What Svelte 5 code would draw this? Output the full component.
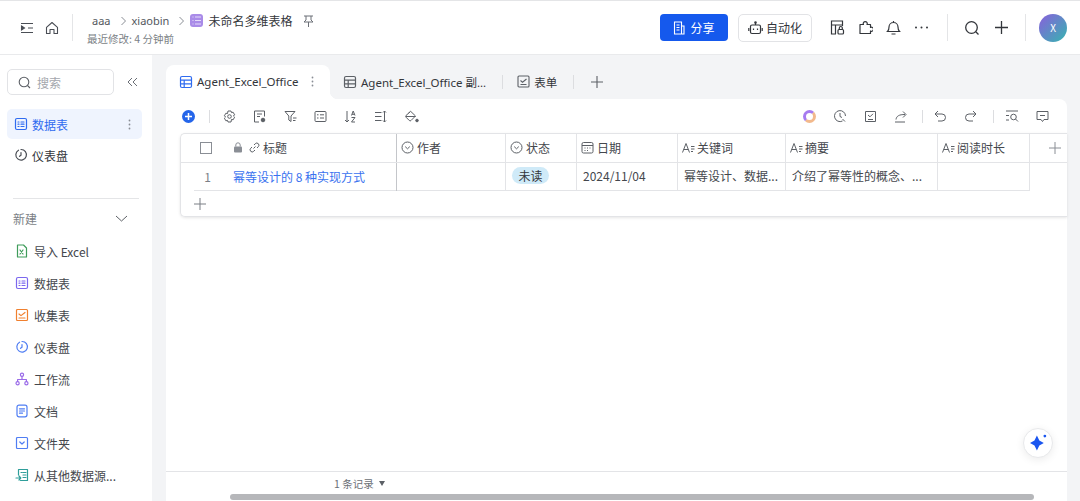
<script>
	const newItems = [
		{ label: '导入 Excel', icon: 'excel', color: '#3f9c5a' },
		{ label: '数据表', icon: 'table', color: '#7b67ee' },
		{ label: '收集表', icon: 'form', color: '#f0802f' },
		{ label: '仪表盘', icon: 'dash', color: '#4f7df3' },
		{ label: '工作流', icon: 'flow', color: '#9a6be8' },
		{ label: '文档', icon: 'doc', color: '#4f7df3' },
		{ label: '文件夹', icon: 'folder', color: '#4f7df3' },
		{ label: '从其他数据源...', icon: 'source', color: '#2f9e9a' }
	];
	const columns = [
		{ label: '作者', icon: 'select', width: 109 },
		{ label: '状态', icon: 'select', width: 71 },
		{ label: '日期', icon: 'date', width: 101 },
		{ label: '关键词', icon: 'text', width: 108 },
		{ label: '摘要', icon: 'text', width: 152 },
		{ label: '阅读时长', icon: 'text', width: 92 }
	];
</script>

{#snippet tableIcon(color)}
	<svg width="14" height="14" viewBox="0 0 14 14" fill="none" stroke={color} stroke-width="1.2">
		<rect x="1.5" y="1.5" width="11" height="11" rx="1.5" />
		<path d="M1.5 5.2h11M1.5 8.8h11M5.2 5.2v7.3" />
	</svg>
{/snippet}

{#snippet sideIcon(kind, color)}
	<svg width="14" height="14" viewBox="0 0 14 14" fill="none" stroke={color} stroke-width="1.2" stroke-linecap="round" stroke-linejoin="round">
		{#if kind === 'excel'}
			<path d="M2.5 1h6l3 3v9h-9z" />
			<path d="M5 6l3 4M8 6l-3 4" />
		{:else if kind === 'table'}
			<rect x="1.5" y="1.5" width="11" height="11" rx="1.5" />
			<path d="M4 5h1M7 5h3M4 7.2h1M7 7.2h3M4 9.5h1M7 9.5h3" />
		{:else if kind === 'form'}
			<rect x="1.5" y="1.5" width="11" height="11" rx="1" />
			<path d="M4 6l2 1.6L10 4.5M4 10h6" />
		{:else if kind === 'dash'}
			<path d="M4.5 2.2a5.3 5.3 0 1 0 2.5-.7" />
			<path d="M7 4.5v2.8l-1.5 1" />
		{:else if kind === 'flow'}
			<circle cx="7" cy="2.8" r="1.6" />
			<circle cx="2.6" cy="11.2" r="1.6" />
			<circle cx="11.4" cy="11.2" r="1.6" />
			<path d="M7 4.5v3M2.6 9.5V7.5h8.8v2" />
		{:else if kind === 'doc'}
			<rect x="2" y="1.2" width="10" height="11.6" rx="2" />
			<path d="M4.5 4.8h5M4.5 7h5M4.5 9.2h3" />
		{:else if kind === 'folder'}
			<rect x="1.5" y="1.5" width="11" height="11" rx="1" />
			<path d="M4.8 6l2.2 2 2.2-2" />
		{:else}
			<path d="M3.5 7V1.5h9v11h-7" />
			<path d="M6 4.5h1M8 4.5h3M8 7h3M8 9.5h3M1 10h4.5M4 8l1.8 2L4 12" />
		{/if}
	</svg>
{/snippet}

{#snippet columnIcon(kind)}
	{#if kind === 'select'}
		<svg width="13" height="13" viewBox="0 0 13 13" fill="none" stroke="#5c6066" stroke-width="1"><circle cx="6.5" cy="6.5" r="5.5" /><path d="M4.2 5.6l2.3 2.2 2.3-2.2" /></svg>
	{:else if kind === 'date'}
		<svg width="13" height="13" viewBox="0 0 13 13" fill="none" stroke="#5c6066" stroke-width="1"><rect x="1" y="1.5" width="11" height="10.5" rx="1.5" /><path d="M1 4.5h11M3.5 7h1M6 7h1M8.5 7h1M3.5 9.5h1M6 9.5h1" /></svg>
	{:else}
		<svg class="text-icon" width="13" height="12" viewBox="0 0 13 12" fill="none" stroke="#5c6066" stroke-width="1"><path d="M0.5 10.5L4 1.5 7.5 10.5M1.7 7.5h4.6M9 4.5h3.5M9 7h3.5M9 9.5h2" /></svg>
	{/if}
{/snippet}

<div class="page">
	<header class="topbar">
		<div class="nav-icons">
			<svg width="14" height="14" viewBox="0 0 14 14" fill="none" stroke="#4a4e55" stroke-width="1.1"><path d="M1 2.5h12M8 7h5M1 11.5h12" /><path d="M1.5 5l3 2-3 2z" fill="#4a4e55" /></svg>
			<svg width="14" height="14" viewBox="0 0 14 14" fill="none" stroke="#4a4e55" stroke-width="1.1" stroke-linejoin="round"><path d="M1.5 6.3L7 1.5l5.5 4.8V12.5H9V8.5H5v4H1.5z" /></svg>
		</div>
		<div class="vline"></div>
		<div class="crumbs">
			<div class="crumb-row">
				<span>aaa</span>
				<svg class="chev" width="7" height="10" viewBox="0 0 7 10" fill="none" stroke="#8a8e95"><path d="M1.5 1l4 4-4 4" /></svg>
				<span>xiaobin</span>
				<svg class="chev" width="7" height="10" viewBox="0 0 7 10" fill="none" stroke="#8a8e95"><path d="M1.5 1l4 4-4 4" /></svg>
				<span class="base-icon">
					<svg width="9" height="9" viewBox="0 0 9 9" stroke="#e5dcfb" stroke-width="1"><path d="M0.5 1h1M3 1h6M0.5 4.5h1M3 4.5h6M0.5 8h1M3 8h6" /></svg>
				</span>
				<span class="base-name">未命名多维表格</span>
				<svg class="pin" width="11" height="12" viewBox="0 0 11 12" fill="none" stroke="#6b6f76"><path d="M1 1h9M3 1v4L1 7h9L8 5V1M5.5 7v5" /></svg>
			</div>
			<div class="modified">最近修改: 4 分钟前</div>
		</div>
		<div class="top-actions">
			<button class="share">
				<svg width="12" height="14" viewBox="0 0 12 14" fill="none" stroke="#fff" stroke-width="1.1"><path d="M1.5 1h7v12h-7zM8.5 5h2.5v8H8.5M3.5 4h3M3.5 6.5h3M3.5 9h3" /></svg>
				分享
			</button>
			<button class="auto">
				<svg width="15" height="14" viewBox="0 0 15 14" fill="none" stroke="#33363b" stroke-width="1.2"><rect x="2.5" y="4" width="10" height="8.5" rx="1.5" /><path d="M7.5 4V1.5M0.8 7v3M14.2 7v3M5.5 7.5v1.5M9.5 7.5v1.5" /><circle cx="7.5" cy="1.5" r="0.7" /></svg>
				自动化
			</button>
			<div class="tool-icons">
				<svg width="15" height="15" viewBox="0 0 15 15" fill="none" stroke="#33363b" stroke-width="1.2"><path d="M6 14H1.5V1h11v5M1.5 5h11M5.5 5v9" /><rect x="8" y="9.5" width="5.5" height="4.5" rx="1" /><path d="M9.3 9.5V8a1.5 1.5 0 0 1 3 0v1.5" /></svg>
				<svg width="15" height="15" viewBox="0 0 15 15" fill="none" stroke="#33363b" stroke-width="1.2" stroke-linejoin="round"><path d="M2 4.5H5.5a2 2 0 1 1 3.500 0H12.500V7.500a2 2 0 1 1 0 3.500V13.500H2z" /></svg>
				<svg width="15" height="15" viewBox="0 0 15 15" fill="none" stroke="#33363b" stroke-width="1.2"><path d="M1.5 11.5c1.2-1 1.5-2 1.5-4.500a4.500 4.500 0 0 1 9 0c0 2.500.3 3.500 1.500 4.500zM5.500 14h4M7.500 2.500V1" /></svg>
				<svg width="15" height="15" viewBox="0 0 15 15" fill="#33363b"><circle cx="2" cy="7.5" r="1" /><circle cx="7.5" cy="7.5" r="1" /><circle cx="13" cy="7.5" r="1" /></svg>
			</div>
			<div class="vline"></div>
			<div class="search-plus">
				<svg width="16" height="16" viewBox="0 0 16 16" fill="none" stroke="#33363b" stroke-width="1.3"><circle cx="7.5" cy="7.5" r="5.8" /><path d="M11.8 11.8L14.5 14.5" /></svg>
				<svg width="15" height="15" viewBox="0 0 15 15" fill="none" stroke="#33363b" stroke-width="1.3"><path d="M7.5 1v13M1 7.5h13" /></svg>
			</div>
			<div class="vline"></div>
			<div class="avatar">X</div>
		</div>
	</header>

	<div class="body">
		<aside class="sidebar">
			<div class="search-row">
				<div class="search">
					<svg width="13" height="13" viewBox="0 0 13 13" fill="none" stroke="#5c6066" stroke-width="1.1"><circle cx="6" cy="6" r="4.8" /><path d="M9.5 9.5L12 12" /></svg>
					<span>搜索</span>
				</div>
				<svg width="11" height="10" viewBox="0 0 11 10" fill="none" stroke="#6b6f76"><path d="M5 1L1 5l4 4M10 1L6 5l4 4" /></svg>
			</div>
			<div class="side-item active">
				{@render sideIcon('table', '#2f6bf0')}
				<span>数据表</span>
				<svg class="kebab" width="3" height="11" viewBox="0 0 3 11" fill="#8a8e95"><circle cx="1.5" cy="1.5" r="0.9" /><circle cx="1.5" cy="5.5" r="0.9" /><circle cx="1.5" cy="9.5" r="0.9" /></svg>
			</div>
			<div class="side-item">
				{@render sideIcon('dash', '#4a4e55')}
				<span>仪表盘</span>
			</div>
			<div class="side-divider"></div>
			<div class="new-head">
				<span>新建</span>
				<svg width="13" height="7" viewBox="0 0 13 7" fill="none" stroke="#5c6066"><path d="M1 1l5.5 5L12 1" /></svg>
			</div>
			<ul class="new-list">
				{#each newItems as item}
					<li>
						{@render sideIcon(item.icon, item.color)}
						<span>{item.label}</span>
					</li>
				{/each}
			</ul>
		</aside>

		<main class="main">
			<div class="tabs">
				<div class="tab current">
					{@render tableIcon('#2f6bf0')}
					<span>Agent_Excel_Office</span>
					<svg class="kebab" width="3" height="11" viewBox="0 0 3 11" fill="#8a8e95"><circle cx="1.5" cy="1.5" r="0.9" /><circle cx="1.5" cy="5.5" r="0.9" /><circle cx="1.5" cy="9.5" r="0.9" /></svg>
				</div>
				<div class="tab second">
					{@render tableIcon('#5c6066')}
					<span>Agent_Excel_Office 副...</span>
				</div>
				<div class="tab-sep"></div>
				<div class="tab third">
					<svg width="13" height="13" viewBox="0 0 13 13" fill="none" stroke="#5c6066" stroke-width="1.1"><rect x="1" y="1" width="11" height="11" rx="1" /><path d="M3.5 5.5l2 1.7 4-3.200M3.500 9.500h6" /></svg>
					<span>表单</span>
				</div>
				<div class="tab-sep"></div>
				<svg class="tab-add" width="12" height="12" viewBox="0 0 12 12" stroke="#5c6066" stroke-width="1.1"><path d="M6 0v12M0 6h12" /></svg>
			</div>

			<section class="panel">
				<div class="toolbar">
					<div class="add-dot">
						<svg width="7" height="7" viewBox="0 0 7 7" stroke="#fff" stroke-width="1.5"><path d="M3.5 0v7M0 3.5h7" /></svg>
					</div>
					<div class="tool-sep"></div>
					<div class="tools">
						<svg width="13" height="13" viewBox="0 0 13 13" fill="none" stroke="#5c6066"><path d="M5 1h3l.5 1.6 1.6-.4 1.5 2.6-1.2 1.2 1.2 1.2-1.5 2.6-1.6-.4L8 12H5l-.5-1.6-1.6.4-1.5-2.6 1.2-1.2-1.2-1.2 1.500-2.600 1.600.4z" /><circle cx="6.5" cy="6.5" r="1.8" /></svg>
						<svg width="13" height="13" viewBox="0 0 13 13" fill="none" stroke="#5c6066"><path d="M6 12H1.5V1h10v5.5M4 4h5M4 6.5h3" /><circle cx="10" cy="10" r="1.8" fill="#5c6066" /></svg>
						<svg width="13" height="13" viewBox="0 0 13 13" fill="none" stroke="#5c6066"><path d="M1 1.5h10L7 6v5.5L4.800 10V6zM9 8h3.500M9 10.500h2.500" /></svg>
						<svg width="13" height="13" viewBox="0 0 13 13" fill="none" stroke="#5c6066"><rect x="1" y="1.5" width="11" height="10" rx="1" /><path d="M3 4.800h1.500M6 4.800h4M3 8h1.500M6 8h4" /></svg>
						<svg width="13" height="13" viewBox="0 0 13 13" fill="none" stroke="#5c6066"><path d="M3 1v11M1 10l2 2 2-2M7.500 5.500l1.700-4.500L11 5.500M8 4.300h2.500M7.500 7.500H11L7.500 12H11" /></svg>
						<svg width="13" height="13" viewBox="0 0 13 13" fill="none" stroke="#5c6066"><path d="M1 2.500h6.500M1 6.500h6.500M1 10.500h6.500M10.500 1v11M9 2.500L10.500 1 12 2.500M9 10.500l1.500 1.500 1.500-1.500" /></svg>
						<svg width="14" height="13" viewBox="0 0 14 13" fill="none" stroke="#5c6066"><path d="M3.500 3.200L5.500 1.200 10.500 6l-4.500 4.500a1.200 1.200 0 0 1-1.700 0L1 7.200a1.200 1.200 0 0 1 0-1.700L5 2M1 6.500h9.500" /><circle cx="12" cy="10.500" r="1.300" fill="#5c6066" /></svg>
					</div>
					<div class="tools right">
						<div class="ai-ring"></div>
						<svg width="14" height="14" viewBox="0 0 14 14" fill="none" stroke="#5c6066"><path d="M12.500 7a5.500 5.500 0 1 0-3 5M7 4v3.500l2 1M9.500 10l2.500 2.500" /></svg>
						<svg width="13" height="13" viewBox="0 0 13 13" fill="none" stroke="#5c6066"><path d="M1.500 1.500h10v10h-10zM4 5l2 1.800L9 3.800M4 9.500h5" /></svg>
						<svg width="14" height="13" viewBox="0 0 14 13" fill="none" stroke="#5c6066"><path d="M1 12h10M2 9.500C2.500 6 5 4.500 11 4.500M9 1.500l3 3-3 3" /></svg>
						<div class="tool-sep"></div>
						<svg width="13" height="12" viewBox="0 0 13 12" fill="none" stroke="#5c6066"><path d="M4 1L1 4l3 3M1 4h7a3.500 3.500 0 0 1 0 7H4" /></svg>
						<svg width="13" height="12" viewBox="0 0 13 12" fill="none" stroke="#5c6066"><path d="M9 1l3 3-3 3M12 4H5a3.500 3.500 0 0 0 0 7h4" /></svg>
						<div class="tool-sep near"></div>
						<svg width="14" height="12" viewBox="0 0 14 12" fill="none" stroke="#5c6066"><path d="M1 1h12M1 5.500h3M1 10h3" /><circle cx="8.500" cy="7" r="2.800" /><path d="M10.500 9l2.500 2.500" /></svg>
						<svg width="13" height="13" viewBox="0 0 13 13" fill="none" stroke="#5c6066"><path d="M1 1.500h11v8H8l-1.500 2L5 9.500H1zM4 5.500h5" /></svg>
					</div>
				</div>

				<div class="table">
					<div class="row head">
						<div class="cell title-cell">
							<span class="check"></span>
							<svg width="10" height="11" viewBox="0 0 10 11" class="lock"><rect x="1" y="4.500" width="8" height="6" rx="1" fill="#8a8e95" /><path d="M2.800 4.500V3a2.200 2.200 0 0 1 4.400 0v1.500" fill="none" stroke="#8a8e95" /></svg>
							<svg class="chain" width="11" height="11" viewBox="0 0 11 11" fill="none" stroke="#5c6066"><path d="M4.500 6.500l2-2M3 5L1.700 6.300a2 2 0 0 0 3 3L6 8M5 3l1.300-1.300a2 2 0 0 1 3 3L8 6" /></svg>
							<span>标题</span>
						</div>
						{#each columns as col}
							<div class="cell" style="width: {col.width}px">
								{@render columnIcon(col.icon)}
								<span>{col.label}</span>
							</div>
						{/each}
						<div class="cell add-col">
							<svg width="12" height="12" viewBox="0 0 12 12" stroke="#8a8e95"><path d="M6 0v12M0 6h12" /></svg>
						</div>
					</div>
					<div class="row data">
						<div class="cell title-cell">
							<span class="num">1</span>
							<span class="link">幂等设计的 8 种实现方式</span>
						</div>
						<div class="cell" style="width: 109px"></div>
						<div class="cell" style="width: 71px"><span class="tag">未读</span></div>
						<div class="cell" style="width: 101px">2024/11/04</div>
						<div class="cell" style="width: 108px">幂等设计、数据...</div>
						<div class="cell" style="width: 152px">介绍了幂等性的概念、...</div>
						<div class="cell" style="width: 92px"></div>
					</div>
					<div class="add-row">
						<svg width="12" height="12" viewBox="0 0 12 12" stroke="#7a7e85"><path d="M6 0v12M0 6h12" /></svg>
					</div>
				</div>

				<div class="spacer">
					<button class="spark" aria-label="AI">
						<svg width="17" height="18" viewBox="0 0 16 17" fill="#1a56f0"><path d="M6.500 1.500L8.800 6.200 13 8.500 8.800 10.800 6.500 15.500 4.200 10.800 0 8.500 4.200 6.200z" /><circle cx="14" cy="2" r="1.300" /></svg>
					</button>
				</div>
				<div class="footer">
					<div class="count">1 条记录 <span class="caret"></span></div>
					<div class="scroll"></div>
				</div>
			</section>
		</main>
	</div>
</div>

<style>
	:global(body) {
		margin: 0;
		background: #f3f4f6;
	}
	.page {
		width: 1080px;
		height: 501px;
		overflow: hidden;
		display: flex;
		flex-direction: column;
		font-family: 'Noto Sans CJK SC', 'Noto Sans', sans-serif;
		font-size: 12px;
		color: #33363b;
	}
	svg {
		flex: none;
		display: block;
	}
	.topbar {
		height: 53px;
		flex: none;
		display: flex;
		align-items: center;
		background: #fff;
		border-top: 1px solid #e4e5e7;
		border-bottom: 1px solid #e9eaec;
		padding-left: 20px;
	}
	.nav-icons {
		display: flex;
		gap: 11px;
		align-items: center;
	}
	.vline {
		width: 1px;
		height: 27px;
		background: #e4e5e7;
		flex: none;
	}
	.topbar > .vline {
		margin: 0 19px 0 13px;
	}
	.crumbs {
		display: flex;
		flex-direction: column;
		margin-top: 1px;
	}
	.crumb-row {
		display: flex;
		align-items: center;
		height: 20px;
		font-size: 11px;
		color: #53575d;
		font-family: 'Noto Sans', 'Noto Sans CJK SC', sans-serif;
	}
	.crumb-row .chev {
		margin: 0 5px 0 9px;
	}
	.base-icon {
		width: 13px;
		height: 13px;
		border-radius: 3px;
		background: #a98be8;
		display: flex;
		align-items: center;
		justify-content: center;
		margin-right: 5px;
	}
	.base-name {
		font-family: 'Noto Sans CJK SC', sans-serif;
		font-size: 12px;
		color: #33363b;
	}
	.pin {
		margin-left: 11px;
	}
	.modified {
		font-size: 10.5px;
		line-height: 15px;
		color: #7b7f86;
		margin-left: -5px;
	}
	.top-actions {
		margin-left: auto;
		display: flex;
		align-items: center;
		padding-right: 13px;
	}
	.share {
		width: 68px;
		height: 27px;
		border: none;
		border-radius: 4px;
		background: #1559ed;
		color: #fff;
		font: inherit;
		display: flex;
		align-items: center;
		justify-content: center;
		gap: 5px;
		padding: 0;
	}
	.auto {
		width: 74px;
		height: 28px;
		margin-left: 10px;
		border: 1px solid #e2e3e6;
		border-radius: 5px;
		background: #fff;
		color: #33363b;
		font: inherit;
		display: flex;
		align-items: center;
		justify-content: center;
		gap: 3px;
		padding: 0;
	}
	.tool-icons {
		display: flex;
		gap: 13px;
		margin: 0 18px;
	}
	.search-plus {
		display: flex;
		gap: 14px;
		margin: 0 16px;
	}
	.avatar {
		width: 28px;
		height: 28px;
		border-radius: 50%;
		margin-left: 13px;
		background: linear-gradient(135deg, #8a5fdc, #35b5b0);
		color: #fff;
		font-size: 10px;
		display: flex;
		align-items: center;
		justify-content: center;
	}
	.body {
		flex: 1;
		min-height: 0;
		display: flex;
	}
	.sidebar {
		width: 152px;
		flex: none;
		background: #fff;
		box-sizing: border-box;
		padding: 14px 10px 0 7px;
	}
	.search-row {
		display: flex;
		align-items: center;
		gap: 13px;
	}
	.search {
		width: 107px;
		height: 26px;
		box-sizing: border-box;
		border: 1px solid #e2e3e6;
		border-radius: 5px;
		display: flex;
		align-items: center;
		gap: 6px;
		padding-left: 10px;
		color: #a4a7ad;
	}
	.side-item {
		height: 30px;
		margin-top: 1px;
		display: flex;
		align-items: center;
		gap: 4px;
		padding-left: 7px;
		border-radius: 5px;
	}
	.side-item.active {
		margin-top: 14px;
		background: #eff4fe;
		color: #2f6bf0;
	}
	.side-item .kebab {
		margin-left: auto;
		margin-right: 11px;
	}
	.side-divider {
		height: 1px;
		background: #e4e5e7;
		margin: 28px 3px 0 6px;
	}
	.new-head {
		display: flex;
		align-items: center;
		justify-content: space-between;
		margin-top: 9px;
		padding: 0 14px 0 6px;
		height: 20px;
		color: #7b7f86;
	}
	.new-list {
		list-style: none;
		margin: 7px 0 0;
		padding: 0 0 0 8px;
	}
	.new-list li {
		height: 32px;
		display: flex;
		align-items: center;
		gap: 5px;
		color: #44474d;
	}
	.main {
		flex: 1;
		min-width: 0;
		padding: 10px 13px 0 14px;
		display: flex;
		flex-direction: column;
	}
	.tabs {
		height: 34px;
		flex: none;
		display: flex;
		align-items: center;
		font-family: 'Noto Sans', 'Noto Sans CJK SC', sans-serif;
		font-size: 11.5px;
		color: #33363b;
	}
	.tab {
		display: flex;
		align-items: center;
		gap: 4px;
		height: 100%;
		box-sizing: border-box;
		padding-bottom: 1px;
	}
	.tab.current {
		width: 164px;
		background: #fff;
		border-radius: 8px 8px 0 0;
		padding-left: 13px;
		position: relative;
	}
	.tab.current::after {
		content: '';
		position: absolute;
		right: -8px;
		bottom: 0;
		width: 8px;
		height: 8px;
		background: radial-gradient(circle at 100% 0, #f3f4f6 8px, #fff 8.5px);
	}
	.tab.current .kebab {
		margin-left: auto;
		margin-right: 16px;
	}
	.tab.second {
		margin-left: 13px;
		gap: 4px;
	}
	.tab-sep {
		width: 1px;
		height: 14px;
		background: #dcdde0;
		margin-left: 16px;
	}
	.tab.third {
		margin-left: 14px;
	}
	.tab-add {
		margin-left: 17px;
	}
	.panel {
		flex: 1;
		min-height: 0;
		background: #fff;
		border-radius: 0 8px 0 0;
		display: flex;
		flex-direction: column;
	}
	.toolbar {
		height: 34px;
		flex: none;
		display: flex;
		align-items: center;
		padding: 0 18px 0 16px;
	}
	.add-dot {
		width: 13px;
		height: 13px;
		border-radius: 50%;
		background: #2465ea;
		display: flex;
		align-items: center;
		justify-content: center;
	}
	.tool-sep {
		width: 1px;
		height: 13px;
		background: #dcdde0;
		flex: none;
	}
	.toolbar > .tool-sep {
		margin: 0 13px 0 14px;
	}
	.tools {
		display: flex;
		align-items: center;
		gap: 17.3px;
	}
	.tools.right {
		margin-left: auto;
		gap: 17px;
	}
	.tools.right .tool-sep {
		margin: 0 -6px 0 -3px;
	}
	.tools.right .tool-sep.near {
		margin-left: -1px;
	}
	.ai-ring {
		width: 7px;
		height: 7px;
		border-radius: 50%;
		border: 3px solid;
		border-color: #a67bf0 #f2b98c #f2b98c #a67bf0;
	}
	.table {
		flex: none;
		margin-left: 14px;
		border: 1px solid #e3e4e7;
		border-right: none;
		border-radius: 5px 0 0 5px;
		box-shadow: 0 1px 3px rgba(0, 0, 0, 0.1);
		box-sizing: border-box;
	}
	.row {
		display: flex;
	}
	.row.head {
		height: 28px;
		border-bottom: 1px solid #e3e4e7;
		color: #44474d;
	}
	.row.head .cell {
		padding-bottom: 1px;
	}
	.row.data {
		height: 28px;
		color: #44474d;
	}
	.row.data .cell {
		border-bottom: 1px solid #e3e4e7;
		padding-left: 6px;
		padding-bottom: 2px;
	}
	.row.data .title-cell {
		padding-left: 0;
		border-bottom: none;
		background: linear-gradient(#e3e4e7, #e3e4e7) 13px 100% / calc(100% - 13px) 1px no-repeat;
	}
	.cell {
		box-sizing: border-box;
		display: flex;
		align-items: center;
		gap: 3px;
		padding-left: 4px;
		border-right: 1px solid #e3e4e7;
		white-space: nowrap;
		overflow: hidden;
	}
	.title-cell {
		width: 216px;
		padding-left: 0;
		border-right: 1px solid #c4c6ca;
	}
	.text-icon {
		margin-right: -1px;
	}
	.check {
		width: 10px;
		height: 10px;
		border: 1px solid #8a8e95;
		margin: 0 18px 0 19px;
	}
	.chain {
		margin-left: 3px;
	}
	.num {
		width: 49px;
		text-align: center;
		color: #7b7f86;
		box-sizing: border-box;
		padding-left: 4px;
	}
	.link {
		color: #3a72ef;
	}
	.add-col {
		flex: 1;
		justify-content: center;
		border-right: none;
		padding-left: 12px;
	}
	.tag {
		background: #cfeaf8;
		color: #33363b;
		border-radius: 9px;
		padding: 0 6.5px;
		line-height: 17px;
	}
	.add-row {
		height: 25px;
		display: flex;
		align-items: center;
		padding-left: 13px;
	}
	.spacer {
		flex: 1;
		min-height: 0;
		position: relative;
	}
	.spark {
		position: absolute;
		right: 14px;
		bottom: 13px;
		width: 30px;
		height: 30px;
		border-radius: 50%;
		border: 1px solid #e8e9eb;
		background: #fff;
		box-shadow: 0 2px 8px rgba(0, 0, 0, 0.08);
		display: flex;
		align-items: center;
		justify-content: center;
		padding: 0;
	}
	.footer {
		height: 30px;
		flex: none;
		border-top: 1px solid #e3e4e7;
		box-sizing: border-box;
		padding-top: 4px;
	}
	.count {
		margin-left: 168px;
		font-size: 10.5px;
		line-height: 15px;
		color: #6b6f76;
		display: flex;
		align-items: center;
		gap: 5px;
	}
	.caret {
		width: 0;
		height: 0;
		border-left: 3.5px solid transparent;
		border-right: 3.5px solid transparent;
		border-top: 5px solid #5c6066;
	}
	.scroll {
		height: 6px;
		margin: 3px 33px 0 64px;
		border-radius: 3px;
		background: #b6b7ba;
	}
</style>
